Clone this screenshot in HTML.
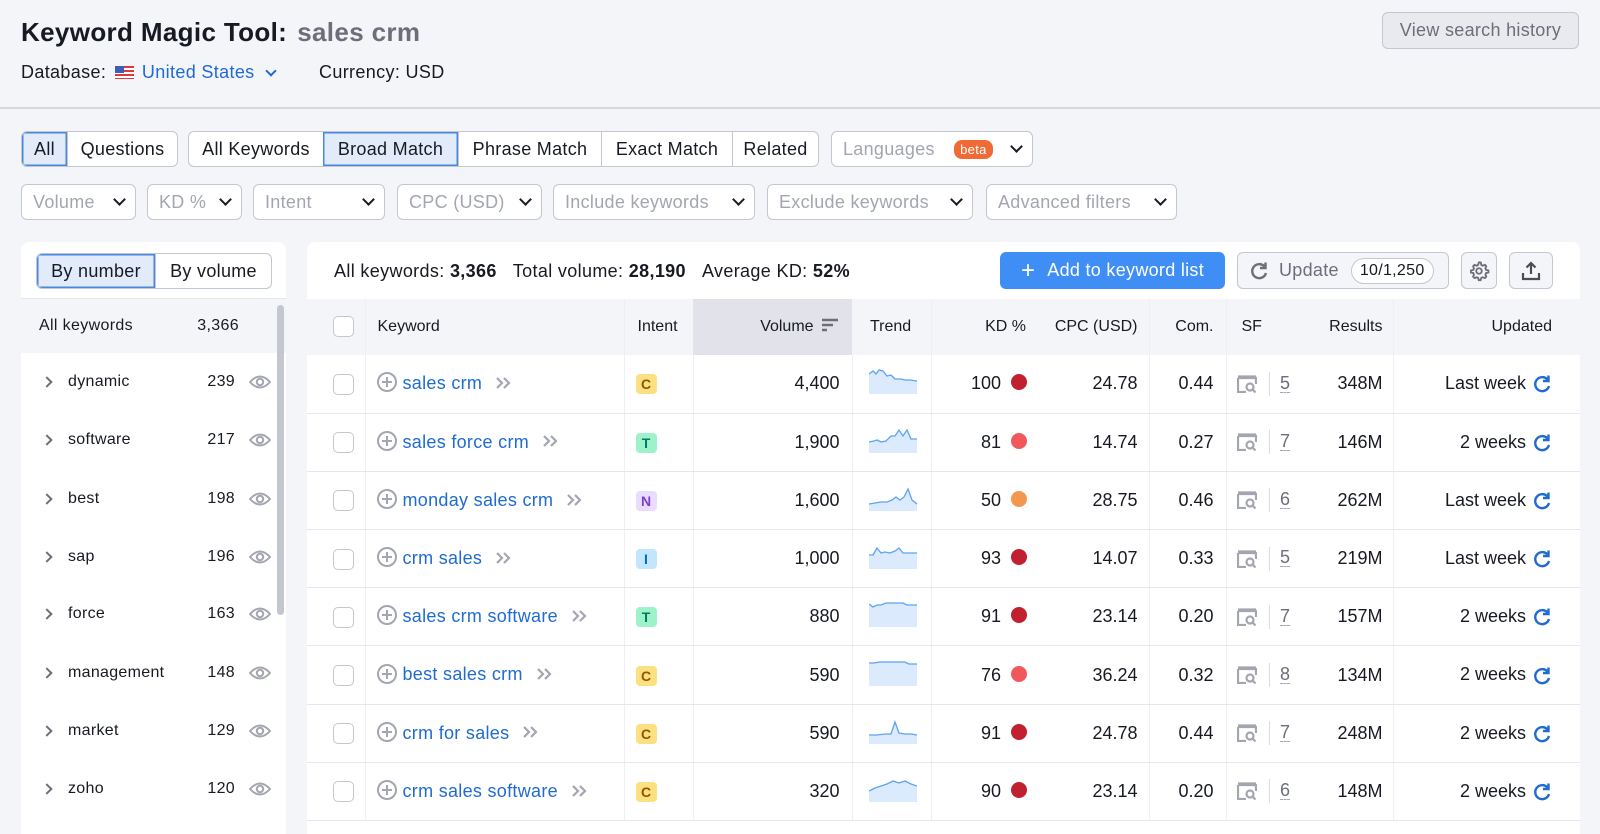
<!DOCTYPE html>
<html><head><meta charset="utf-8"><style>
*{box-sizing:border-box;margin:0;padding:0}
html,body{width:1600px;height:834px;overflow:hidden}
body{background:#f4f5f9;font-family:"Liberation Sans",sans-serif;color:#171a22;position:relative}
.a{position:absolute}
.ls{letter-spacing:0.35px}
.btn{position:absolute;height:36px;border:1px solid #c4c7cf;background:#fff;border-radius:6px;font-size:18px;display:flex;align-items:center;padding:0 11px;color:#171a22;white-space:nowrap;letter-spacing:0.3px}
.ph{color:#a3a6b0;justify-content:space-between}
.chev{width:9px;height:9px;border-right:2.5px solid #171a22;border-bottom:2.5px solid #171a22;transform:rotate(45deg);margin-top:-5px;margin-left:10px}
.seg{position:absolute;height:36px;display:flex;border:1px solid #c4c7cf;border-radius:6px;background:#fff;font-size:18px;overflow:hidden;letter-spacing:0.3px}
.seg div{display:flex;align-items:center;justify-content:center;border-left:1px solid #c4c7cf;flex:none}
.seg div:first-child{border-left:none}
.seg .on{background:#e1ebfa;box-shadow:inset 0 0 0 1.5px #4a87e0;border-left:none}
.panel{position:absolute;background:#fff;border-radius:8px}
table{border-collapse:collapse;table-layout:fixed;position:absolute;left:307px;top:299px;width:1273px;font-size:18px}
th{height:56px;font-weight:normal;font-size:16px;background:#f4f5f9;border-bottom:1px solid #dcdde3;color:#171a22}
td{height:58.2px;border-bottom:1.5px solid #e6e7ec;background:#fff;white-space:nowrap}
.bl{border-left:1px solid #eeeff3}
.r{text-align:right}
.cb{display:inline-block;width:21px;height:21px;border:1.5px solid #c4c7cf;border-radius:5px;background:#fff;vertical-align:middle}
.kw{color:#1f6bd1;letter-spacing:0.3px}
.pl{display:inline-block;width:20px;height:20px;border:2px solid #a3a6b0;border-radius:50%;vertical-align:middle;position:relative;margin-right:6px;top:-2px}
.pl:before{content:"";position:absolute;left:3px;top:7px;width:10px;height:2px;background:#a3a6b0}
.pl:after{content:"";position:absolute;left:7px;top:3px;width:2px;height:10px;background:#a3a6b0}
.dd{display:inline-block;vertical-align:middle;margin-left:13px;margin-top:-3px}
.bd{display:inline-block;width:21px;height:20px;border-radius:4px;text-align:center;font-size:14px;font-weight:bold;line-height:20px}
.C{background:#fce081;color:#8d5800}.T{background:#9ef2c9;color:#007c65}.N{background:#eadcff;color:#7d3fd0}.I{background:#c4e5fe;color:#006dca}
.dot{display:inline-block;width:16px;height:16px;border-radius:50%;margin-left:10px;vertical-align:-1px}
.d1{background:#c1202f}.d2{background:#f0595b}.d3{background:#f3964f}
.sf{display:inline-block;vertical-align:middle}
.num{display:inline-block;border-bottom:1.5px dashed #a3a6b0;line-height:18px;color:#6c6e79;margin-left:10px}
.vd{display:inline-block;width:1.5px;height:24px;background:#dcdde3;vertical-align:middle;margin-left:12px}
.rf{display:inline-block;vertical-align:middle;margin-left:6px}
.li{position:absolute;left:21px;width:256px;height:58px;display:flex;align-items:center;font-size:16px;letter-spacing:0.3px}
.li .c{width:8px;height:8px;border-right:2px solid #6c6e79;border-top:2px solid #6c6e79;transform:rotate(45deg);margin-left:22px}
.li .t{margin-left:17px;flex:1}
.li .n{width:58px;text-align:right;margin-right:4px}
.li svg{margin-left:10px;margin-right:6px}
</style></head><body>

<div class="a ls" style="left:21px;top:17px;font-size:26px;font-weight:bold">Keyword Magic Tool:<span style="color:#6c6e79;margin-left:10px">sales crm</span></div>
<div class="a ls" style="left:21px;top:62px;font-size:18px">Database: <span style="display:inline-block;width:19px;height:13px;vertical-align:-1px;margin:0 3px;background:repeating-linear-gradient(#d93a3a 0 2px,#fff 2px 4px);position:relative"><span style="position:absolute;left:0;top:0;width:9px;height:7px;background:#3b5fb8"></span></span> <span style="color:#1f6bd1">United States</span><span class="chev" style="display:inline-block;border-color:#1f6bd1;margin-left:12px;vertical-align:3px;width:8px;height:8px"></span></div>
<div class="a ls" style="left:319px;top:62px;font-size:18px">Currency: USD</div>
<div class="btn" style="left:1382px;top:12px;height:37px;background:#e9eaee;color:#6c6e79;width:197px;justify-content:center">View search history</div>
<div class="a" style="left:0;top:107px;width:1600px;height:2px;background:#d6d8de"></div>

<div class="seg" style="left:21px;top:131px"><div class="on" style="width:45px">All</div><div style="width:110px">Questions</div></div>
<div class="seg" style="left:188px;top:131px"><div style="width:134px">All Keywords</div><div class="on" style="width:135px">Broad Match</div><div style="width:143px">Phrase Match</div><div style="width:131px">Exact Match</div><div style="width:86px">Related</div></div>
<div class="btn ph" style="left:831px;top:131px;width:202px">Languages<span style="background:#ef6a35;color:#fff;font-size:13px;border-radius:8px;padding:2px 6px;margin-left:10px">beta</span><span class="chev"></span></div>

<div class="btn ph" style="left:21px;top:184px;width:115px">Volume<span class="chev"></span></div>
<div class="btn ph" style="left:147px;top:184px;width:95px">KD %<span class="chev"></span></div>
<div class="btn ph" style="left:253px;top:184px;width:132px">Intent<span class="chev"></span></div>
<div class="btn ph" style="left:397px;top:184px;width:145px">CPC (USD)<span class="chev"></span></div>
<div class="btn ph" style="left:553px;top:184px;width:202px">Include keywords<span class="chev"></span></div>
<div class="btn ph" style="left:767px;top:184px;width:206px">Exclude keywords<span class="chev"></span></div>
<div class="btn ph" style="left:986px;top:184px;width:191px">Advanced filters<span class="chev"></span></div>

<!-- left panel -->
<div class="panel" style="left:21px;top:242px;width:265px;height:620px"></div>
<div class="seg" style="left:36px;top:253px;height:36px"><div class="on" style="width:118px">By number</div><div style="width:116px">By volume</div></div>
<div class="a" style="left:21px;top:298px;width:265px;height:55px;background:#f4f5f9;border-top:1px solid #e6e7ec"></div>
<div class="a ls" style="left:39px;top:317px;font-size:16px">All keywords</div>
<div class="a ls" style="left:180px;top:317px;width:59px;text-align:right;font-size:16px">3,366</div>
<div class="a" style="left:277px;top:305px;width:7px;height:310px;background:#c4c7cf;border-radius:4px"></div>

<div class="li" style="top:353px"><span class="c"></span><span class="t">dynamic</span><span class="n">239</span><svg width="22" height="16" viewBox="0 0 22 16"><path d="M1 8Q11-3 21 8Q11 19 1 8Z" fill="none" stroke="#a3a6b0" stroke-width="2"/><circle cx="11" cy="8" r="3.2" fill="none" stroke="#a3a6b0" stroke-width="2"/></svg></div>
<div class="li" style="top:411px"><span class="c"></span><span class="t">software</span><span class="n">217</span><svg width="22" height="16" viewBox="0 0 22 16"><path d="M1 8Q11-3 21 8Q11 19 1 8Z" fill="none" stroke="#a3a6b0" stroke-width="2"/><circle cx="11" cy="8" r="3.2" fill="none" stroke="#a3a6b0" stroke-width="2"/></svg></div>
<div class="li" style="top:470px"><span class="c"></span><span class="t">best</span><span class="n">198</span><svg width="22" height="16" viewBox="0 0 22 16"><path d="M1 8Q11-3 21 8Q11 19 1 8Z" fill="none" stroke="#a3a6b0" stroke-width="2"/><circle cx="11" cy="8" r="3.2" fill="none" stroke="#a3a6b0" stroke-width="2"/></svg></div>
<div class="li" style="top:528px"><span class="c"></span><span class="t">sap</span><span class="n">196</span><svg width="22" height="16" viewBox="0 0 22 16"><path d="M1 8Q11-3 21 8Q11 19 1 8Z" fill="none" stroke="#a3a6b0" stroke-width="2"/><circle cx="11" cy="8" r="3.2" fill="none" stroke="#a3a6b0" stroke-width="2"/></svg></div>
<div class="li" style="top:585px"><span class="c"></span><span class="t">force</span><span class="n">163</span><svg width="22" height="16" viewBox="0 0 22 16"><path d="M1 8Q11-3 21 8Q11 19 1 8Z" fill="none" stroke="#a3a6b0" stroke-width="2"/><circle cx="11" cy="8" r="3.2" fill="none" stroke="#a3a6b0" stroke-width="2"/></svg></div>
<div class="li" style="top:644px"><span class="c"></span><span class="t">management</span><span class="n">148</span><svg width="22" height="16" viewBox="0 0 22 16"><path d="M1 8Q11-3 21 8Q11 19 1 8Z" fill="none" stroke="#a3a6b0" stroke-width="2"/><circle cx="11" cy="8" r="3.2" fill="none" stroke="#a3a6b0" stroke-width="2"/></svg></div>
<div class="li" style="top:702px"><span class="c"></span><span class="t">market</span><span class="n">129</span><svg width="22" height="16" viewBox="0 0 22 16"><path d="M1 8Q11-3 21 8Q11 19 1 8Z" fill="none" stroke="#a3a6b0" stroke-width="2"/><circle cx="11" cy="8" r="3.2" fill="none" stroke="#a3a6b0" stroke-width="2"/></svg></div>
<div class="li" style="top:760px"><span class="c"></span><span class="t">zoho</span><span class="n">120</span><svg width="22" height="16" viewBox="0 0 22 16"><path d="M1 8Q11-3 21 8Q11 19 1 8Z" fill="none" stroke="#a3a6b0" stroke-width="2"/><circle cx="11" cy="8" r="3.2" fill="none" stroke="#a3a6b0" stroke-width="2"/></svg></div>

<!-- right panel -->
<div class="panel" style="left:307px;top:242px;width:1273px;height:620px"></div>
<div class="a ls" style="left:334px;top:261px;font-size:18px">All keywords: <b>3,366</b>&nbsp;&nbsp;&nbsp;Total volume: <b>28,190</b>&nbsp;&nbsp;&nbsp;Average KD: <b>52%</b></div>
<div class="btn" style="left:1000px;top:252px;width:225px;height:37px;background:#3f8ef5;border-color:#3f8ef5;color:#fff;justify-content:center"><span style="font-size:24px;margin-right:12px;line-height:1">+</span>Add to keyword list</div>
<div class="btn" style="left:1237px;top:252px;width:212px;height:37px;background:#f4f5f9;color:#6c6e79"><svg width="20" height="20" viewBox="0 0 20 20"><path d="M15.5 5.5A7 7 0 1 0 17 12" fill="none" stroke="#6c6e79" stroke-width="2.4"/><path d="M16.5 1.5V7H11" fill="none" stroke="#6c6e79" stroke-width="2.4"/></svg><span style="margin-left:10px">Update</span><span style="margin-left:12px;border:1px solid #c4c7cf;border-radius:13px;padding:3px 8px;font-size:16px;background:#fff;color:#171a22">10/1,250</span></div>
<div class="btn" style="left:1461px;top:252px;width:36px;height:37px;background:#f4f5f9;justify-content:center;padding:0"><svg width="22" height="22" viewBox="0 0 24 24"><path d="M12 2.5l2 .3.5 2.5 1.6.9 2.4-.9 1.4 1.5-.9 2.4.8 1.6 2.5.6v2.2l-2.5.5-.8 1.7.9 2.4-1.5 1.5-2.4-.9-1.6.8-.6 2.5h-2.1l-.5-2.5-1.7-.8-2.4.9-1.5-1.5.9-2.4-.8-1.7-2.5-.5v-2.2l2.5-.6.8-1.6-.9-2.4 1.5-1.5 2.4.9 1.6-.9.6-2.5z" fill="none" stroke="#6c6e79" stroke-width="2"/><circle cx="12" cy="12" r="3" fill="none" stroke="#6c6e79" stroke-width="2"/></svg></div>
<div class="btn" style="left:1509px;top:252px;width:44px;height:37px;background:#f4f5f9;justify-content:center;padding:0"><svg width="20" height="20" viewBox="0 0 20 20"><path d="M10 13V2M5.5 6.5L10 2l4.5 4.5M2 12v6h16v-6" fill="none" stroke="#4a4d57" stroke-width="2.2"/></svg></div>

<table>
<colgroup><col style="width:58px"><col style="width:259px"><col style="width:69px"><col style="width:159px"><col style="width:79px"><col style="width:99px"><col style="width:119px"><col style="width:77px"><col style="width:74px"><col style="width:93px"><col style="width:187px"></colgroup>
<tr><th style="padding-left:26px;text-align:left"><span class="cb"></span></th><th class="bl" style="text-align:left;padding-left:12px">Keyword</th><th class="bl" style="text-align:left;padding-left:13px">Intent</th><th class="r" style="background:#e2e3ea;padding-right:14px">Volume <svg width="16" height="14" viewBox="0 0 16 14" style="vertical-align:-1px;margin-left:4px"><path d="M0 2h16M0 7h11M0 12h5" stroke="#6c6e79" stroke-width="2.5"/></svg></th><th style="text-align:left;padding-left:18px">Trend</th><th class="r bl" style="padding-right:4px">KD %</th><th class="r" style="padding-right:11px">CPC (USD)</th><th class="r bl" style="padding-right:12px">Com.</th><th class="bl" style="text-align:left;padding-left:15px">SF</th><th class="r" style="padding-right:10px">Results</th><th class="r bl" style="padding-right:28px">Updated</th></tr>
</table>

<table style="top:355px">
<colgroup><col style="width:58px"><col style="width:259px"><col style="width:69px"><col style="width:159px"><col style="width:79px"><col style="width:99px"><col style="width:119px"><col style="width:77px"><col style="width:74px"><col style="width:93px"><col style="width:187px"></colgroup>
<tr><td style="padding-left:26px"><span class="cb"></span></td><td class="bl" style="padding-left:11px"><span class="pl"></span><span class="kw">sales crm</span><svg class="dd" width="16" height="14" viewBox="0 0 16 14"><path d="M2 2l5 5-5 5M9 2l5 5-5 5" fill="none" stroke="#a3a6b0" stroke-width="2.2"/></svg></td><td class="bl" style="padding-left:11px"><span class="bd C">C</span></td><td class="r bl" style="padding-right:12px">4,400</td><td class="bl" style="padding-left:16px"><svg width="48" height="26" viewBox="0 0 48 26"><path d="M0 6L4 3 7 6 10 2 14 3 18 8 22 7 26 11 32 11 36 12 41 12 48 13V26H0Z" fill="#dbeafc"/><path d="M0 6L4 3 7 6 10 2 14 3 18 8 22 7 26 11 32 11 36 12 41 12 48 13" fill="none" stroke="#5ca3f2" stroke-width="1.3"/></svg></td><td class="r bl" style="padding-right:3px">100<span class="dot d1"></span></td><td class="r" style="padding-right:11px">24.78</td><td class="r bl" style="padding-right:12px">0.44</td><td class="bl" style="padding-left:10px"><svg class="sf" width="20" height="18" viewBox="0 0 20 18"><path d="M1 3V17H9M1 3H19V9M1 1.5H19" fill="none" stroke="#a3a6b0" stroke-width="2.2"/><circle cx="13" cy="12" r="3.5" fill="none" stroke="#a3a6b0" stroke-width="2.2"/><path d="M15.5 14.5L18.5 17.5" stroke="#a3a6b0" stroke-width="2.2"/></svg><span class="vd"></span><span class="num">5</span></td><td class="r" style="padding-right:10px">348M</td><td class="r bl" style="padding-right:28px">Last week<svg class="rf" width="20" height="20" viewBox="0 0 20 20"><path d="M15.5 5.5A7 7 0 1 0 17 12" fill="none" stroke="#1f6bd1" stroke-width="2.4"/><path d="M16.5 1.5V7H11" fill="none" stroke="#1f6bd1" stroke-width="2.4"/></svg></td></tr>

<tr><td style="padding-left:26px"><span class="cb"></span></td><td class="bl" style="padding-left:11px"><span class="pl"></span><span class="kw">sales force crm</span><svg class="dd" width="16" height="14" viewBox="0 0 16 14"><path d="M2 2l5 5-5 5M9 2l5 5-5 5" fill="none" stroke="#a3a6b0" stroke-width="2.2"/></svg></td><td class="bl" style="padding-left:11px"><span class="bd T">T</span></td><td class="r bl" style="padding-right:12px">1,900</td><td class="bl" style="padding-left:16px"><svg width="48" height="26" viewBox="0 0 48 26"><path d="M0 15L5 14 8 13 12 15 17 14 22 9 26 9 30 3 34 9 38 3 42 12 48 12V26H0Z" fill="#dbeafc"/><path d="M0 15L5 14 8 13 12 15 17 14 22 9 26 9 30 3 34 9 38 3 42 12 48 12" fill="none" stroke="#5ca3f2" stroke-width="1.3"/></svg></td><td class="r bl" style="padding-right:3px">81<span class="dot d2"></span></td><td class="r" style="padding-right:11px">14.74</td><td class="r bl" style="padding-right:12px">0.27</td><td class="bl" style="padding-left:10px"><svg class="sf" width="20" height="18" viewBox="0 0 20 18"><path d="M1 3V17H9M1 3H19V9M1 1.5H19" fill="none" stroke="#a3a6b0" stroke-width="2.2"/><circle cx="13" cy="12" r="3.5" fill="none" stroke="#a3a6b0" stroke-width="2.2"/><path d="M15.5 14.5L18.5 17.5" stroke="#a3a6b0" stroke-width="2.2"/></svg><span class="vd"></span><span class="num">7</span></td><td class="r" style="padding-right:10px">146M</td><td class="r bl" style="padding-right:28px">2 weeks<svg class="rf" width="20" height="20" viewBox="0 0 20 20"><path d="M15.5 5.5A7 7 0 1 0 17 12" fill="none" stroke="#1f6bd1" stroke-width="2.4"/><path d="M16.5 1.5V7H11" fill="none" stroke="#1f6bd1" stroke-width="2.4"/></svg></td></tr>

<tr><td style="padding-left:26px"><span class="cb"></span></td><td class="bl" style="padding-left:11px"><span class="pl"></span><span class="kw">monday sales crm</span><svg class="dd" width="16" height="14" viewBox="0 0 16 14"><path d="M2 2l5 5-5 5M9 2l5 5-5 5" fill="none" stroke="#a3a6b0" stroke-width="2.2"/></svg></td><td class="bl" style="padding-left:11px"><span class="bd N">N</span></td><td class="r bl" style="padding-right:12px">1,600</td><td class="bl" style="padding-left:16px"><svg width="48" height="26" viewBox="0 0 48 26"><path d="M0 19L6 18 12 17 18 17 23 15 27 12 31 15 35 12 39 4 43 15 48 19V26H0Z" fill="#dbeafc"/><path d="M0 19L6 18 12 17 18 17 23 15 27 12 31 15 35 12 39 4 43 15 48 19" fill="none" stroke="#5ca3f2" stroke-width="1.3"/></svg></td><td class="r bl" style="padding-right:3px">50<span class="dot d3"></span></td><td class="r" style="padding-right:11px">28.75</td><td class="r bl" style="padding-right:12px">0.46</td><td class="bl" style="padding-left:10px"><svg class="sf" width="20" height="18" viewBox="0 0 20 18"><path d="M1 3V17H9M1 3H19V9M1 1.5H19" fill="none" stroke="#a3a6b0" stroke-width="2.2"/><circle cx="13" cy="12" r="3.5" fill="none" stroke="#a3a6b0" stroke-width="2.2"/><path d="M15.5 14.5L18.5 17.5" stroke="#a3a6b0" stroke-width="2.2"/></svg><span class="vd"></span><span class="num">6</span></td><td class="r" style="padding-right:10px">262M</td><td class="r bl" style="padding-right:28px">Last week<svg class="rf" width="20" height="20" viewBox="0 0 20 20"><path d="M15.5 5.5A7 7 0 1 0 17 12" fill="none" stroke="#1f6bd1" stroke-width="2.4"/><path d="M16.5 1.5V7H11" fill="none" stroke="#1f6bd1" stroke-width="2.4"/></svg></td></tr>

<tr><td style="padding-left:26px"><span class="cb"></span></td><td class="bl" style="padding-left:11px"><span class="pl"></span><span class="kw">crm sales</span><svg class="dd" width="16" height="14" viewBox="0 0 16 14"><path d="M2 2l5 5-5 5M9 2l5 5-5 5" fill="none" stroke="#a3a6b0" stroke-width="2.2"/></svg></td><td class="bl" style="padding-left:11px"><span class="bd I">I</span></td><td class="r bl" style="padding-right:12px">1,000</td><td class="bl" style="padding-left:16px"><svg width="48" height="26" viewBox="0 0 48 26"><path d="M0 12L4 12 8 5 12 10 16 9 21 10 26 8 30 5 34 10 48 10V26H0Z" fill="#dbeafc"/><path d="M0 12L4 12 8 5 12 10 16 9 21 10 26 8 30 5 34 10 48 10" fill="none" stroke="#5ca3f2" stroke-width="1.3"/></svg></td><td class="r bl" style="padding-right:3px">93<span class="dot d1"></span></td><td class="r" style="padding-right:11px">14.07</td><td class="r bl" style="padding-right:12px">0.33</td><td class="bl" style="padding-left:10px"><svg class="sf" width="20" height="18" viewBox="0 0 20 18"><path d="M1 3V17H9M1 3H19V9M1 1.5H19" fill="none" stroke="#a3a6b0" stroke-width="2.2"/><circle cx="13" cy="12" r="3.5" fill="none" stroke="#a3a6b0" stroke-width="2.2"/><path d="M15.5 14.5L18.5 17.5" stroke="#a3a6b0" stroke-width="2.2"/></svg><span class="vd"></span><span class="num">5</span></td><td class="r" style="padding-right:10px">219M</td><td class="r bl" style="padding-right:28px">Last week<svg class="rf" width="20" height="20" viewBox="0 0 20 20"><path d="M15.5 5.5A7 7 0 1 0 17 12" fill="none" stroke="#1f6bd1" stroke-width="2.4"/><path d="M16.5 1.5V7H11" fill="none" stroke="#1f6bd1" stroke-width="2.4"/></svg></td></tr>

<tr><td style="padding-left:26px"><span class="cb"></span></td><td class="bl" style="padding-left:11px"><span class="pl"></span><span class="kw">sales crm software</span><svg class="dd" width="16" height="14" viewBox="0 0 16 14"><path d="M2 2l5 5-5 5M9 2l5 5-5 5" fill="none" stroke="#a3a6b0" stroke-width="2.2"/></svg></td><td class="bl" style="padding-left:11px"><span class="bd T">T</span></td><td class="r bl" style="padding-right:12px">880</td><td class="bl" style="padding-left:16px"><svg width="48" height="26" viewBox="0 0 48 26"><path d="M0 3L4 6 8 4 12 4 17 2 34 2 38 4 48 4V26H0Z" fill="#dbeafc"/><path d="M0 3L4 6 8 4 12 4 17 2 34 2 38 4 48 4" fill="none" stroke="#5ca3f2" stroke-width="1.3"/></svg></td><td class="r bl" style="padding-right:3px">91<span class="dot d1"></span></td><td class="r" style="padding-right:11px">23.14</td><td class="r bl" style="padding-right:12px">0.20</td><td class="bl" style="padding-left:10px"><svg class="sf" width="20" height="18" viewBox="0 0 20 18"><path d="M1 3V17H9M1 3H19V9M1 1.5H19" fill="none" stroke="#a3a6b0" stroke-width="2.2"/><circle cx="13" cy="12" r="3.5" fill="none" stroke="#a3a6b0" stroke-width="2.2"/><path d="M15.5 14.5L18.5 17.5" stroke="#a3a6b0" stroke-width="2.2"/></svg><span class="vd"></span><span class="num">7</span></td><td class="r" style="padding-right:10px">157M</td><td class="r bl" style="padding-right:28px">2 weeks<svg class="rf" width="20" height="20" viewBox="0 0 20 20"><path d="M15.5 5.5A7 7 0 1 0 17 12" fill="none" stroke="#1f6bd1" stroke-width="2.4"/><path d="M16.5 1.5V7H11" fill="none" stroke="#1f6bd1" stroke-width="2.4"/></svg></td></tr>

<tr><td style="padding-left:26px"><span class="cb"></span></td><td class="bl" style="padding-left:11px"><span class="pl"></span><span class="kw">best sales crm</span><svg class="dd" width="16" height="14" viewBox="0 0 16 14"><path d="M2 2l5 5-5 5M9 2l5 5-5 5" fill="none" stroke="#a3a6b0" stroke-width="2.2"/></svg></td><td class="bl" style="padding-left:11px"><span class="bd C">C</span></td><td class="r bl" style="padding-right:12px">590</td><td class="bl" style="padding-left:16px"><svg width="48" height="26" viewBox="0 0 48 26"><path d="M0 3L5 3 10 2 36 2 40 4 48 4V26H0Z" fill="#dbeafc"/><path d="M0 3L5 3 10 2 36 2 40 4 48 4" fill="none" stroke="#5ca3f2" stroke-width="1.3"/></svg></td><td class="r bl" style="padding-right:3px">76<span class="dot d2"></span></td><td class="r" style="padding-right:11px">36.24</td><td class="r bl" style="padding-right:12px">0.32</td><td class="bl" style="padding-left:10px"><svg class="sf" width="20" height="18" viewBox="0 0 20 18"><path d="M1 3V17H9M1 3H19V9M1 1.5H19" fill="none" stroke="#a3a6b0" stroke-width="2.2"/><circle cx="13" cy="12" r="3.5" fill="none" stroke="#a3a6b0" stroke-width="2.2"/><path d="M15.5 14.5L18.5 17.5" stroke="#a3a6b0" stroke-width="2.2"/></svg><span class="vd"></span><span class="num">8</span></td><td class="r" style="padding-right:10px">134M</td><td class="r bl" style="padding-right:28px">2 weeks<svg class="rf" width="20" height="20" viewBox="0 0 20 20"><path d="M15.5 5.5A7 7 0 1 0 17 12" fill="none" stroke="#1f6bd1" stroke-width="2.4"/><path d="M16.5 1.5V7H11" fill="none" stroke="#1f6bd1" stroke-width="2.4"/></svg></td></tr>

<tr><td style="padding-left:26px"><span class="cb"></span></td><td class="bl" style="padding-left:11px"><span class="pl"></span><span class="kw">crm for sales</span><svg class="dd" width="16" height="14" viewBox="0 0 16 14"><path d="M2 2l5 5-5 5M9 2l5 5-5 5" fill="none" stroke="#a3a6b0" stroke-width="2.2"/></svg></td><td class="bl" style="padding-left:11px"><span class="bd C">C</span></td><td class="r bl" style="padding-right:12px">590</td><td class="bl" style="padding-left:16px"><svg width="48" height="26" viewBox="0 0 48 26"><path d="M0 17L8 17 16 16 22 16 26 4 30 15 36 16 42 16 48 17V26H0Z" fill="#dbeafc"/><path d="M0 17L8 17 16 16 22 16 26 4 30 15 36 16 42 16 48 17" fill="none" stroke="#5ca3f2" stroke-width="1.3"/></svg></td><td class="r bl" style="padding-right:3px">91<span class="dot d1"></span></td><td class="r" style="padding-right:11px">24.78</td><td class="r bl" style="padding-right:12px">0.44</td><td class="bl" style="padding-left:10px"><svg class="sf" width="20" height="18" viewBox="0 0 20 18"><path d="M1 3V17H9M1 3H19V9M1 1.5H19" fill="none" stroke="#a3a6b0" stroke-width="2.2"/><circle cx="13" cy="12" r="3.5" fill="none" stroke="#a3a6b0" stroke-width="2.2"/><path d="M15.5 14.5L18.5 17.5" stroke="#a3a6b0" stroke-width="2.2"/></svg><span class="vd"></span><span class="num">7</span></td><td class="r" style="padding-right:10px">248M</td><td class="r bl" style="padding-right:28px">2 weeks<svg class="rf" width="20" height="20" viewBox="0 0 20 20"><path d="M15.5 5.5A7 7 0 1 0 17 12" fill="none" stroke="#1f6bd1" stroke-width="2.4"/><path d="M16.5 1.5V7H11" fill="none" stroke="#1f6bd1" stroke-width="2.4"/></svg></td></tr>

<tr><td style="padding-left:26px"><span class="cb"></span></td><td class="bl" style="padding-left:11px"><span class="pl"></span><span class="kw">crm sales software</span><svg class="dd" width="16" height="14" viewBox="0 0 16 14"><path d="M2 2l5 5-5 5M9 2l5 5-5 5" fill="none" stroke="#a3a6b0" stroke-width="2.2"/></svg></td><td class="bl" style="padding-left:11px"><span class="bd C">C</span></td><td class="r bl" style="padding-right:12px">320</td><td class="bl" style="padding-left:16px"><svg width="48" height="26" viewBox="0 0 48 26"><path d="M0 15L6 12 12 10 18 8 24 5 30 7 36 5 42 8 48 10V26H0Z" fill="#dbeafc"/><path d="M0 15L6 12 12 10 18 8 24 5 30 7 36 5 42 8 48 10" fill="none" stroke="#5ca3f2" stroke-width="1.3"/></svg></td><td class="r bl" style="padding-right:3px">90<span class="dot d1"></span></td><td class="r" style="padding-right:11px">23.14</td><td class="r bl" style="padding-right:12px">0.20</td><td class="bl" style="padding-left:10px"><svg class="sf" width="20" height="18" viewBox="0 0 20 18"><path d="M1 3V17H9M1 3H19V9M1 1.5H19" fill="none" stroke="#a3a6b0" stroke-width="2.2"/><circle cx="13" cy="12" r="3.5" fill="none" stroke="#a3a6b0" stroke-width="2.2"/><path d="M15.5 14.5L18.5 17.5" stroke="#a3a6b0" stroke-width="2.2"/></svg><span class="vd"></span><span class="num">6</span></td><td class="r" style="padding-right:10px">148M</td><td class="r bl" style="padding-right:28px">2 weeks<svg class="rf" width="20" height="20" viewBox="0 0 20 20"><path d="M15.5 5.5A7 7 0 1 0 17 12" fill="none" stroke="#1f6bd1" stroke-width="2.4"/><path d="M16.5 1.5V7H11" fill="none" stroke="#1f6bd1" stroke-width="2.4"/></svg></td></tr>
</table>
</body></html>
